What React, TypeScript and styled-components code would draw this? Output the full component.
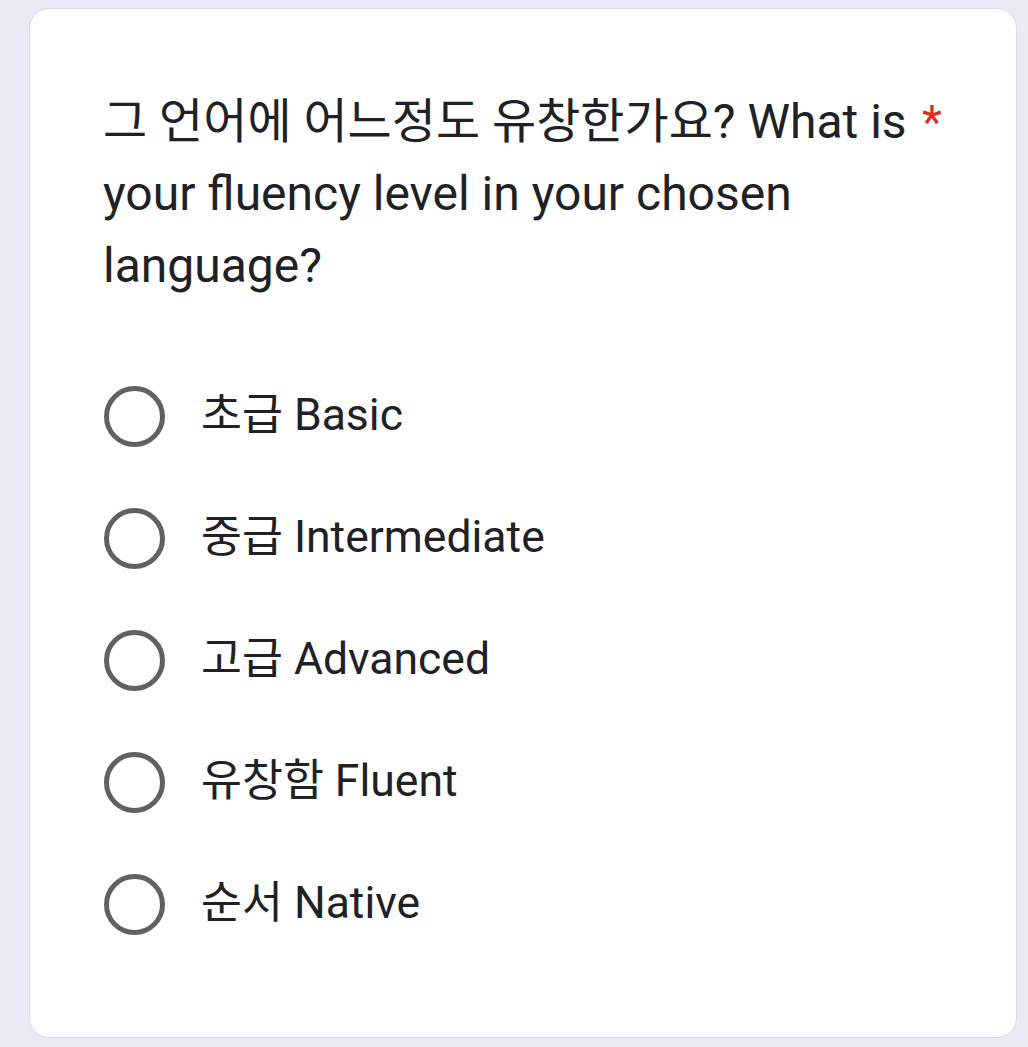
import React from "react";
import styled, { createGlobalStyle } from "styled-components";

const Global = createGlobalStyle`
  html, body { margin: 0; padding: 0; }
  body {
    background: #ece9f6;
    font-family: Roboto, "Noto Sans CJK KR", "Noto Sans", sans-serif;
    color: #202124;
  }
`;

const Page = styled.div`
  width: 1028px;
  height: 1047px;
  box-sizing: border-box;
  padding: 8px 11px 9px 29px;
  background: #ece9f6;
`;

const Card = styled.div`
  height: 100%;
  box-sizing: border-box;
  background: #fefefe;
  border: 1.5px solid #dcdae2;
  border-radius: 20px;
  padding: 77px 40px 0 73px;
`;

const TitleRow = styled.div`
  display: flex;
  align-items: flex-start;
`;

const Title = styled.div`
  width: 815px;
  font-size: 48px;
  line-height: 72px;
  color: #202124;
`;

const Required = styled.span`
  color: #d93025;
  font-size: 46px;
  line-height: 72px;
  padding-left: 4px;
`;

const Options = styled.div`
  display: flex;
  flex-direction: column;
  margin-top: 53px;
`;

const Option = styled.label`
  display: flex;
  align-items: center;
  height: 122px;
  gap: 35px;
`;

const Radio = styled.svg`
  width: 63px;
  height: 63px;
  flex: none;
`;

const OptionText = styled.span`
  font-size: 44.5px;
  line-height: 56px;
  margin-bottom: 2px;
  color: #202124;
`;

const options = [
  "초급 Basic",
  "중급 Intermediate",
  "고급 Advanced",
  "유창함 Fluent",
  "순서 Native",
];

export default function App() {
  return (
    <>
      <Global />
      <Page>
        <Card>
          <TitleRow>
            <Title>
              그 언어에 어느정도 유창한가요? What is your fluency level in your chosen language?
            </Title>
            <Required>*</Required>
          </TitleRow>
          <Options>
            {options.map((o) => (
              <Option key={o}>
                <Radio viewBox="0 0 63 63">
                  <circle cx="31.5" cy="31.5" r="28" fill="none" stroke="#616161" strokeWidth="5" />
                </Radio>
                <OptionText>{o}</OptionText>
              </Option>
            ))}
          </Options>
        </Card>
      </Page>
    </>
  );
}
